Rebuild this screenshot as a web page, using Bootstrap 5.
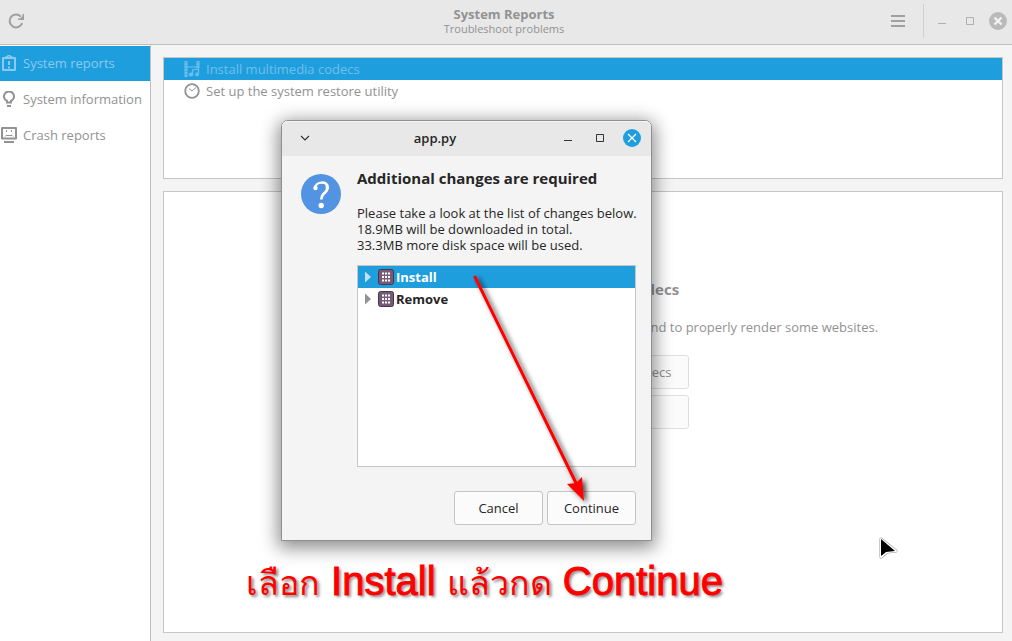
<!DOCTYPE html>
<html lang="en">
<head>
<meta charset="utf-8">
<meta name="viewport" content="width=device-width, initial-scale=1">
<title>System Reports</title>
<link rel="stylesheet" href="https://cdn.jsdelivr.net/npm/bootstrap@5.3.0/dist/css/bootstrap.min.css">
<style>
  :root { --accent: #1f9ede; --chrome: #e8e8e8; --window: #f4f4f4; --edge: #bfbfbf; --dim: #929292; --ink: #262626; }
  body { font: 13px/16px "Open Sans", "Noto Sans", sans-serif; color: var(--dim); background: var(--window); }
  svg { display: block; flex: none; }
  .app { min-height: 100vh; }
  .app-header { height: 45px; background: var(--chrome); border-bottom: 1px solid var(--edge); padding-bottom: 2px; }
  .app-title { font-size: 13px; line-height: 16px; font-weight: 700; margin: 0; }
  .app-subtitle { font-size: 11px; line-height: 13px; padding-bottom: 2px; }
  .plain-btn { border: 0; background: none; padding: 0; color: inherit; }
  .header-rule { width: 1px; height: 34px; background: #cfcfcf; margin: 0 8px 0 18px; }
  .sidebar { width: 151px; background: #fff; border-right: 1px solid var(--edge); padding-top: 1px; }
  .side-link { height: 35px; margin-bottom: 1px; color: var(--dim); text-decoration: none; padding: 0 0 2px 1px; gap: 6px; white-space: nowrap; }
  .side-link.active { background: var(--accent); color: #8acaf0; }
  .content-area { gap: 12px; padding: 12px 9px 8px 12px; }
  .panel { background: #fff; border: 1px solid #c6c6c6; }
  .report-list { height: 122px; }
  .report-row { height: 22px; padding-left: 20px; gap: 6px; color: var(--dim); text-decoration: none; }
  .report-row.active { background: var(--accent); color: #6fc0ec; }
  .report-body { padding-top: 85px; }
  .report-body h2, .dialog-heading { font-size: 15px; line-height: 24px; font-weight: 700; margin: 0; }
  .report-body p { line-height: 20px; margin: 16px 0 18px; white-space: nowrap; }
  .gtk-btn { height: 34px; border: 1px solid #c4c4c4; border-radius: 3px; background: #fbfbfb; color: var(--ink); font-size: 13px; padding: 0 15px; }
  .report-actions { width: 212px; gap: 6px; }
  .report-actions .gtk-btn { color: #8f8f8f; border-color: #dedede; }
  .dialog-window { position: absolute; left: 281px; top: 120px; width: 371px; background: var(--window); color: var(--ink);
    border: 1px solid #8f8f8f; border-radius: 7px 7px 0 0; box-shadow: 0 4px 18px 3px rgba(0,0,0,.45); }
  .dialog-bar { height: 35px; padding: 0 9px 2px 16px; background: var(--chrome); border-radius: 6px 6px 0 0; box-shadow: inset 0 1px #f8f8f8; }
  .dialog-bar h1 { font-size: 13px; line-height: 16px; font-weight: 600; margin: 0; }
  .dialog-content { padding: 10px 15px 15px 19px; }
  .dialog-main { min-width: 0; }
  .dialog-text { margin: 15px 0 0; white-space: nowrap; }
  .change-list { height: 202px; margin: 12px 0 24px; }
  .change-row { height: 22px; padding-left: 6px; font-weight: 700; }
  .change-row.active { background: var(--accent); color: #fff; }
  .dialog-actions { gap: 4px; }
  .dialog-actions .gtk-btn { width: 89px; }
  .pointer-arrow { position: absolute; left: 180px; top: 145px; pointer-events: none; }
  .caption-note { position: absolute; left: 246px; top: 558px; font: 40px/46px "Liberation Sans", sans-serif; color: #f00; white-space: nowrap;
    -webkit-text-stroke: 1px #f00; text-shadow: 2px 2px 3px rgba(0,0,0,.5); }
  .caption-note [lang=th] { font-size: 34px; -webkit-text-stroke: 0; }
  .mouse-cursor { position: absolute; left: 878px; top: 536px; }
</style>
<script defer src="https://cdn.jsdelivr.net/npm/bootstrap@5.3.0/dist/js/bootstrap.bundle.min.js"></script>
</head>
<body>
<div class="app d-flex flex-column position-relative overflow-hidden">
  <header class="app-header row g-0 align-items-center">
    <div class="col">
      <button class="plain-btn ms-2 d-block" aria-label="Refresh">
        <svg width="16" height="16" viewBox="0 0 16 16"><path d="M12.8 3.6A6.4 6.4 0 1 0 14.1 10.200" fill="none" stroke="#a0a0a0" stroke-width="2"/><path d="M16 1v6H10V5.500h2L14.500 3V1z" fill="#a0a0a0"/></svg>
      </button>
    </div>
    <div class="col-auto text-center">
      <h1 class="app-title">System Reports</h1>
      <div class="app-subtitle">Troubleshoot problems</div>
    </div>
    <div class="col d-flex justify-content-end align-items-center pe-1">
      <button class="plain-btn" aria-label="Menu">
        <svg width="14" height="12" viewBox="0 0 14 12"><path d="M0 1h14M0 6h14M0 11h14" stroke="#a0a0a0" stroke-width="2"/></svg>
      </button>
      <span class="header-rule"></span>
      <button class="plain-btn px-1" aria-label="Minimize">
        <svg width="18" height="18"><path d="M2 11.500h8" stroke="#b0b0b0"/></svg>
      </button>
      <button class="plain-btn px-1" aria-label="Maximize">
        <svg width="18" height="18"><path d="M4.500 5.500h7v7h-7z" fill="none" stroke="#b0b0b0"/></svg>
      </button>
      <button class="plain-btn ms-1" aria-label="Close">
        <svg width="20" height="20"><circle cx="10" cy="10" r="9" fill="#bababa"/><path d="M6.500 6.500l7 7m0-7l-7 7" stroke="#f3f3f3" stroke-width="2.400"/></svg>
      </button>
    </div>
  </header>

  <div class="d-flex flex-grow-1">
    <nav class="sidebar flex-shrink-0" aria-label="Sections">
      <a class="side-link active d-flex align-items-center" href="#reports">
        <svg width="16" height="16" fill="none" stroke="currentColor"><path d="M2 3h12v12H2z" stroke-width="2" stroke-linejoin="round"/><path d="M5 4V2h1.500a1.500 1.500 0 0 1 3 0H11v2" stroke-width="1.500"/><path d="M8 6v4M8 11.500v2" stroke-width="2"/></svg>
        System reports
      </a>
      <a class="side-link d-flex align-items-center" href="#information">
        <svg width="16" height="16" fill="none" stroke="currentColor"><path d="M6 11.500V10A5 5 0 1 1 10 10v1.500z" stroke-width="2"/><path d="M6 15h4" stroke-width="2"/></svg>
        System information
      </a>
      <a class="side-link d-flex align-items-center" href="#crash">
        <svg width="16" height="16" fill="none" stroke="currentColor"><path d="M1 1h14v10.500H1z" stroke-width="2" stroke-linejoin="round"/><path d="M3 15h10" stroke-width="2"/><path d="M5.500 3v2M10.500 3v2M4 9.500l1-1h6l1 1"/></svg>
        Crash reports
      </a>
    </nav>

    <main class="content-area flex-grow-1 d-flex flex-column">
      <div class="panel report-list">
        <a class="report-row active d-flex align-items-center" href="#codecs">
          <svg width="16" height="16" fill="none" stroke="currentColor"><path d="M2 0v16M14 0v7" stroke-width="3"/><path d="M2 1v15M14 1v6" stroke="#1f9ede" stroke-dasharray="1 2"/><path d="M3 6h10"/><path d="M8.500 13V9l6-1v5" stroke-width="1.200"/><ellipse cx="7" cy="13.500" rx="2" ry="1.500" fill="currentColor"/><ellipse cx="13" cy="13.500" rx="1.500" ry="1.500" fill="currentColor"/></svg>
          Install multimedia codecs
        </a>
        <a class="report-row d-flex align-items-center" href="#restore">
          <svg width="16" height="16" fill="none" stroke="currentColor"><circle cx="8" cy="8" r="6.800" stroke-width="1.800"/><path d="M5 5.500l3 2.500 4-3.500"/></svg>
          Set up the system restore utility
        </a>
      </div>

      <section class="panel report-body flex-grow-1 d-flex flex-column align-items-center">
        <h2>Install multimedia codecs</h2>
        <p>Multimedia codecs are required to play various video files, and to properly render some websites.</p>
        <div class="report-actions d-grid">
          <button class="gtk-btn">Install the multimedia codecs</button>
          <button class="gtk-btn">Ignore this report</button>
        </div>
      </section>
    </main>
  </div>

  <div class="dialog-window" role="dialog" aria-labelledby="dlg-title">
    <div class="dialog-bar d-flex align-items-center">
      <button class="plain-btn" aria-label="Window menu">
        <svg width="14" height="14"><path d="M3 5l4 4 4-4" fill="none" stroke="#333" stroke-width="1.200"/></svg>
      </button>
      <h1 class="flex-grow-1 text-center" id="dlg-title">app.py</h1>
      <div class="d-flex align-items-center gap-2">
        <button class="plain-btn me-1" aria-label="Minimize">
          <svg width="20" height="18"><path d="M6 11.500h8" stroke="#333"/></svg>
        </button>
        <button class="plain-btn me-1" aria-label="Maximize">
          <svg width="20" height="18"><path d="M6.500 5.500h7v7h-7z" fill="none" stroke="#333"/></svg>
        </button>
        <button class="plain-btn" aria-label="Close">
          <svg width="20" height="20"><circle cx="10" cy="10" r="9" fill="#1f9ede"/><path d="M6 6l8 8m0-8l-8 8" stroke="#fff" stroke-width="1.200"/></svg>
        </button>
      </div>
    </div>
    <div class="dialog-content d-flex gap-3">
      <svg class="mt-2" width="40" height="40" viewBox="0 0 40 40" aria-hidden="true"><circle cx="20" cy="20" r="20" fill="#5294e2"/><path d="M14 14.500C14 7 27.500 6.500 26.800 14 26.300 19 20.300 18.500 20.300 25.500" fill="none" stroke="#fff" stroke-width="2.500"/><circle cx="14.500" cy="14" r="2.200" fill="#fff"/><path d="M24 9c6 3 3.500 9-1 12 1.500-4 2.500-7 1-12z" fill="#fff"/><circle cx="20.200" cy="31.500" r="2.700" fill="#fff"/></svg>
      <div class="dialog-main flex-grow-1">
        <h2 class="dialog-heading">Additional changes are required</h2>
        <p class="dialog-text">Please take a look at the list of changes below.<br>18.9MB will be downloaded in total.<br>33.3MB more disk space will be used.</p>
        <div class="panel change-list" role="tree">
          <div class="change-row active d-flex align-items-center" role="treeitem">
            <svg width="32" height="16"><path d="M1 2.500l6 5.500-6 5.500z" fill="#bfe1f5"/><use href="#pkg"/></svg>Install
          </div>
          <div class="change-row d-flex align-items-center" role="treeitem">
            <svg width="32" height="16"><defs><g id="pkg"><rect x="14.500" y=".5" width="15" height="15" rx="2" fill="#755a78" stroke="#49364c"/><path d="M18 4.500h8M18 8h8M18 11.500h8" stroke="#fff" stroke-width="2" stroke-dasharray="2 1"/></g></defs><path d="M1 2.500l6 5.500-6 5.500z" fill="#929292"/><use href="#pkg"/></svg>Remove
          </div>
        </div>
        <div class="dialog-actions d-flex justify-content-end">
          <button class="gtk-btn">Cancel</button>
          <button class="gtk-btn">Continue</button>
        </div>
      </div>
    </div>
    <svg class="pointer-arrow" width="150" height="250" aria-hidden="true">
      <defs><filter id="soft" x="-20%" y="-20%" width="150%" height="150%"><feDropShadow dx="3" dy="2" stdDeviation="2.500" flood-color="#000" flood-opacity=".7"/></filter></defs>
      <g filter="url(#soft)"><path d="M13 11L114 217" stroke="#f00" stroke-width="3" stroke-linecap="round"/><path d="M122 235L105 218l9-1 6-6z" fill="#f00"/></g>
    </svg>
  </div>

  <div class="caption-note"><span lang="th">เลือก</span> Install <span lang="th">แล้วกด</span> Continue</div>

  <svg class="mouse-cursor" width="20" height="24" aria-hidden="true"><path d="M3 3v18l6-5 9-1z" fill="#000" stroke="#999" stroke-width="3" stroke-linejoin="round"/><path d="M3 3v18l6-5 9-1z" fill="#000" stroke="#fff" stroke-width="2" stroke-linejoin="round"/><path d="M3 3v17l5-4 9-1z" fill="#000"/></svg>
</div>
</body>
</html>
